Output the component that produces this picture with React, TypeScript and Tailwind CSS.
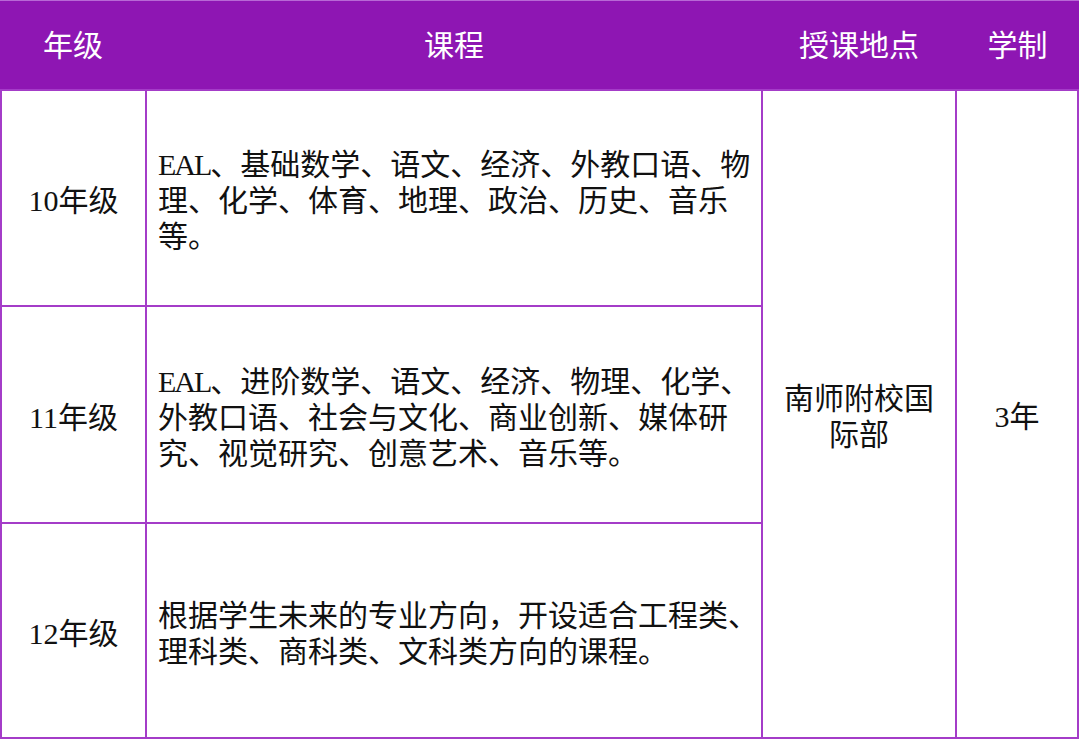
import React from "react";

const font = "font-['Liberation_Serif','Noto_Sans_CJK_SC',serif]";

function EAL() {
  return <span className="tracking-[-2px]">EAL</span>;
}

export default function App() {
  const cell = "bg-white flex items-center pt-[6px] text-[30px] leading-[36px] text-[#111]";
  return (
    <div className={`w-[1080px] h-[741px] bg-white ${font}`}>
      <div className="w-[1079px]">
        <div className="flex h-[89px] bg-[#8e16b3] border-t border-[#b868d6] text-white text-[30px]">
          <div className="w-[146px] flex items-center justify-center">年级</div>
          <div className="w-[616px] flex items-center justify-center">课程</div>
          <div className="w-[194px] flex items-center justify-center">授课地点</div>
          <div className="w-[123px] flex items-center justify-center">学制</div>
        </div>
        <div className="grid grid-cols-[143px_614px_192px_120px] grid-rows-[214px_215px_213px] gap-[2px] p-[2px] bg-[#a43cc8]">
          <div className={`${cell} justify-center`}>10年级</div>
          <div className={`${cell} pl-[11px] whitespace-nowrap`}>
            <div>
              <EAL />、基础数学、语文、经济、外教口语、物<br />
              理、化学、体育、地理、政治、历史、音乐<br />
              等。
            </div>
          </div>
          <div className={`${cell} row-span-3 justify-center text-center`}>
            <div>
              南师附校国<br />际部
            </div>
          </div>
          <div className={`${cell} row-span-3 justify-center`}>3年</div>
          <div className={`${cell} justify-center`}>11年级</div>
          <div className={`${cell} pl-[11px] whitespace-nowrap`}>
            <div>
              <EAL />、进阶数学、语文、经济、物理、化学、<br />
              外教口语、社会与文化、商业创新、媒体研<br />
              究、视觉研究、创意艺术、音乐等。
            </div>
          </div>
          <div className={`${cell} justify-center`}>12年级</div>
          <div className={`${cell} pl-[11px] whitespace-nowrap`}>
            <div>
              根据学生未来的专业方向，开设适合工程类、<br />
              理科类、商科类、文科类方向的课程。
            </div>
          </div>
        </div>
      </div>
    </div>
  );
}
